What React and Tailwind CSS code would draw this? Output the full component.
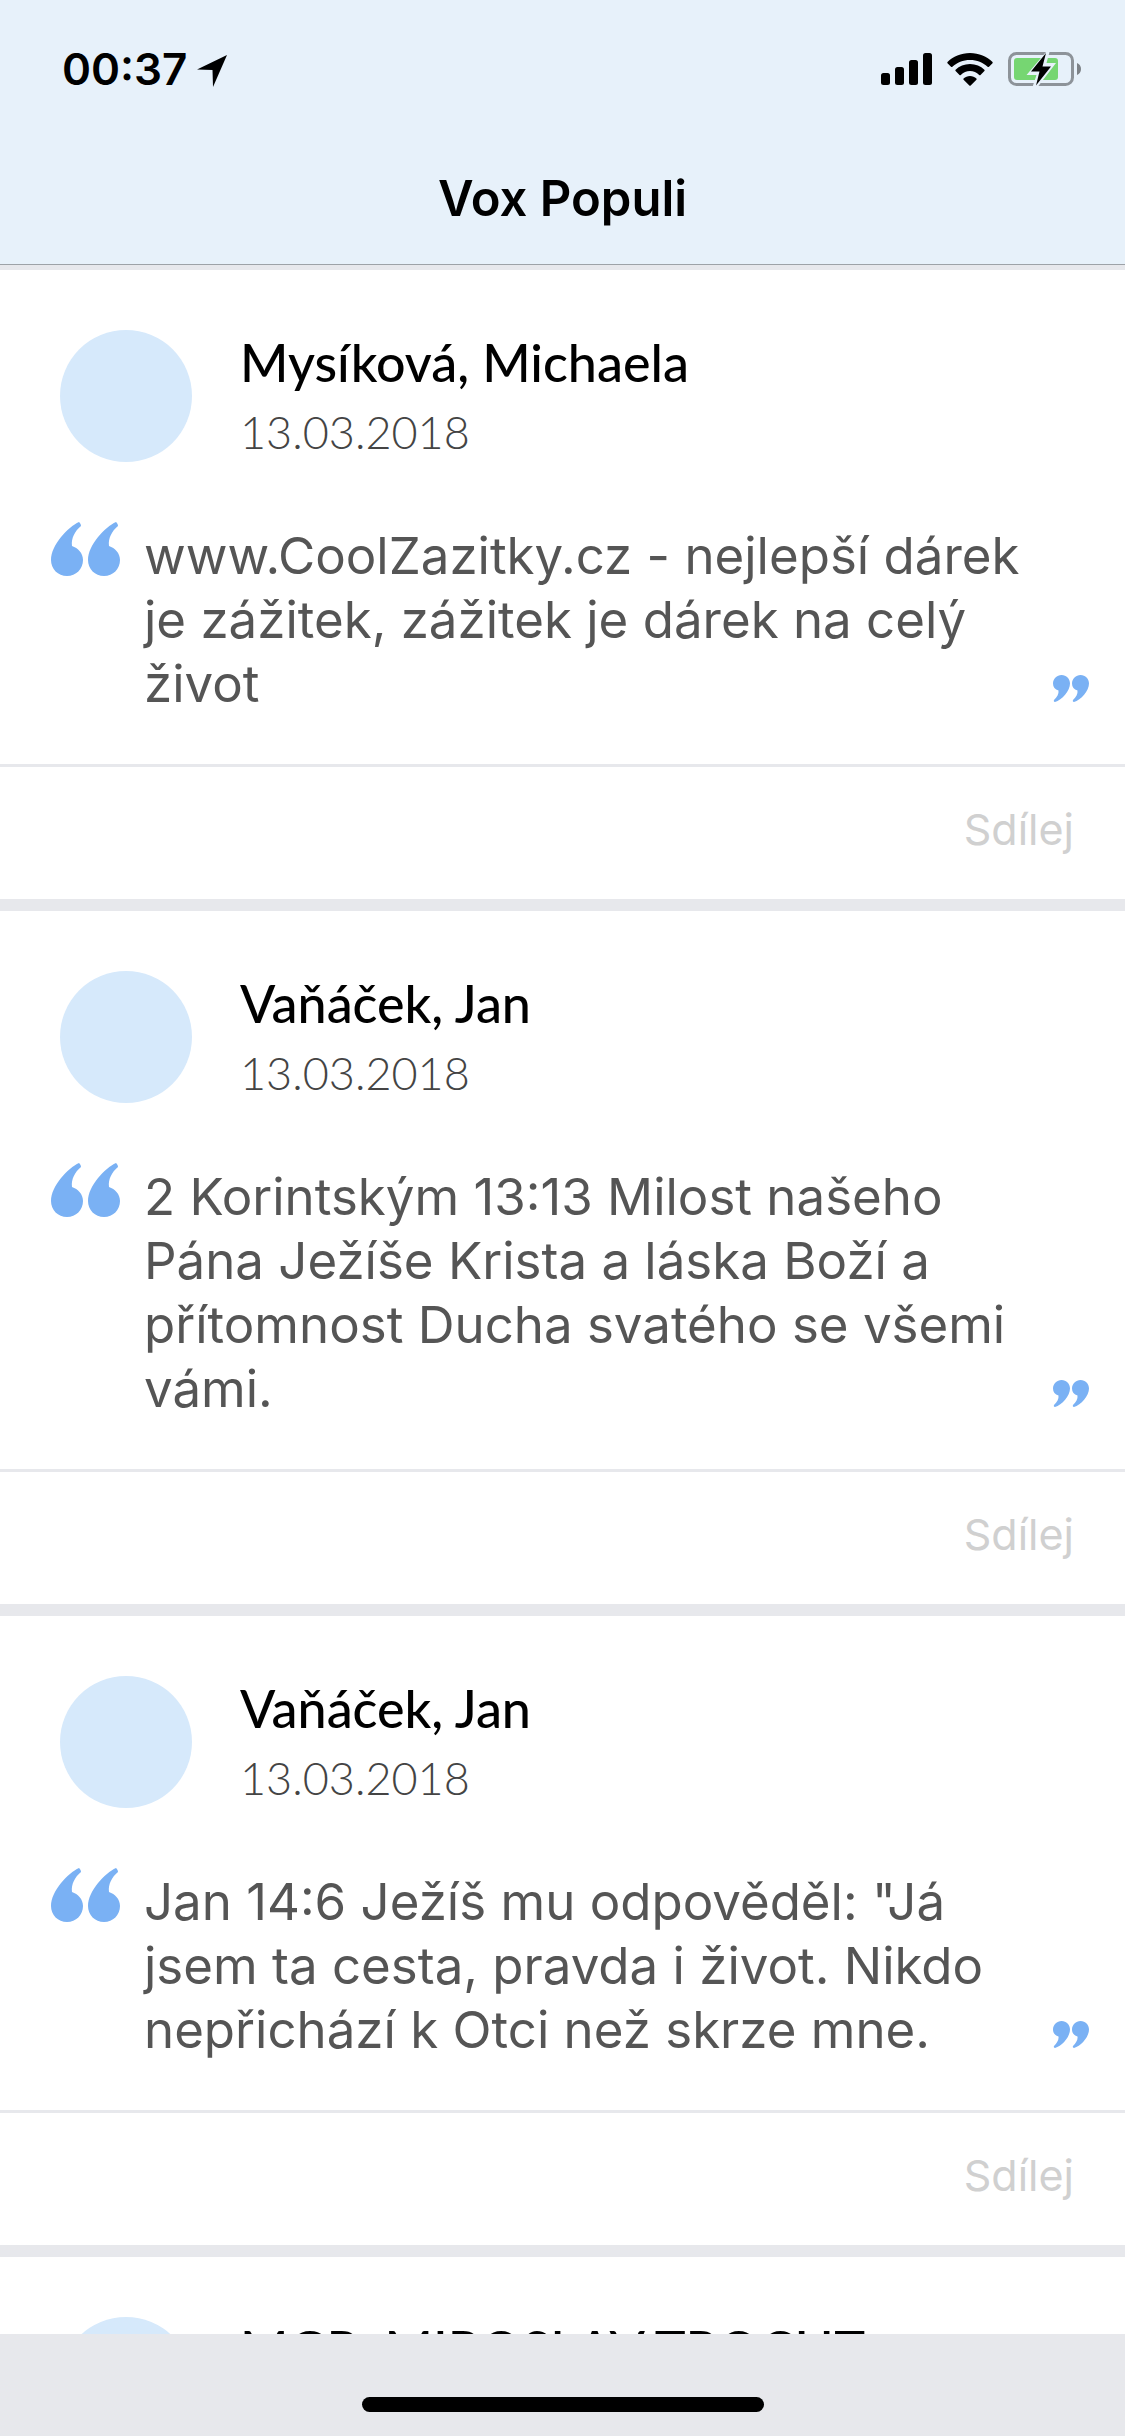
const posts = [
  { name: "Mysíková, Michaela", date: "13.03.2018", text: ["www.CoolZazitky.cz - nejlepší dárek", "je zážitek, zážitek je dárek na celý", "život"] },
  { name: "Vaňáček, Jan", date: "13.03.2018", text: ["2 Korintským 13:13 Milost našeho", "Pána Ježíše Krista a láska Boží a", "přítomnost Ducha svatého se všemi", "vámi."] },
  { name: "Vaňáček, Jan", date: "13.03.2018", text: ["Jan 14:6 Ježíš mu odpověděl: \"Já", "jsem ta cesta, pravda i život. Nikdo", "nepřichází k Otci než skrze mne."] },
  { name: "MGR. MIROSLAV TROCHT" },
];

function OpenQuote() {
  return (
    <svg viewBox="0 0 69 54" className="h-[54px] w-[69px] shrink-0 fill-[#7ab1f4]" aria-hidden="true">
      <path d="M28 0C29 1 30 2 30 4C24 9 20 16 21 24C27 26 32 31 32 38C32 47 25 54 16 54C7 54 0 47 0 38C0 23 17 5 28 0Z" />
      <path d="M65 0C66 1 67 2 67 4C61 9 57 16 58 24C64 26 69 31 69 38C69 47 62 54 53 54C44 54 37 47 37 38C37 23 54 5 65 0Z" />
    </svg>
  );
}

function CloseQuote() {
  return (
    <svg viewBox="0 0 36 27" className="h-[27px] w-9 shrink-0 fill-[#7ab1f4]" aria-hidden="true">
      <path d="M8.500 0C13.500 0 17 4 17 8.500C17 16 9 25 2 27C1 27 .5 26 1 25C4 22 6 19 5.500 15.500C2 14.500 0 12 0 8.500C0 4 4 0 8.500 0Z" />
      <path d="M27.500 0C32.500 0 36 4 36 8.500C36 16 28 25 21 27C20 27 19.500 26 20 25C23 22 25 19 24.500 15.500C21 14.500 19 12 19 8.500C19 4 23 0 27.500 0Z" />
    </svg>
  );
}

function StatusIcons() {
  return (
    <div className="flex items-center gap-[15px]">
      <svg viewBox="0 0 51 32" className="h-8 w-[51px]" aria-label="Signal" role="img">
        <rect x="0" y="20" width="9" height="12" rx="2.500" />
        <rect x="14" y="14" width="9" height="18" rx="2.500" />
        <rect x="28" y="7" width="9" height="25" rx="2.500" />
        <rect x="42" y="0" width="9" height="32" rx="2.500" />
      </svg>
      <svg viewBox="0 0 46 33" className="h-[33px] w-[46px]" aria-label="Wi-Fi" role="img">
        <path d="M23 0C32 0 40 3.500 45.500 9Q46 9.700 45.500 10.300L42 13.700Q41.300 14.200 40.600 13.700C36 9.500 30 7 23 7S10 9.500 5.400 13.700Q4.700 14.200 4 13.700L.5 10.300Q0 9.700 .5 9C6 3.500 14 0 23 0Z" />
        <path d="M23 11C28.700 11 33.700 13.200 37.400 16.700Q38 17.400 37.400 18.100L33.500 21.900Q32.900 22.400 32.200 21.900C29.600 19.500 26.500 18 23 18S16.400 19.500 13.800 21.900Q13.100 22.400 12.500 21.900L8.600 18.100Q8 17.400 8.600 16.700C12.300 13.200 17.300 11 23 11Z" />
        <path d="M23 23C25.500 23 27.700 24 29.400 25.500Q30 26.100 29.400 26.800L23.700 32.400Q23 33 22.300 32.400L16.600 26.800Q16 26.100 16.600 25.500C18.300 24 20.500 23 23 23Z" />
      </svg>
      <svg viewBox="0 0 73 34" className="h-[34px] w-[73px]" aria-label="Battery charging" role="img">
        <rect x="1.500" y="1.500" width="63" height="31" rx="7" fill="none" stroke="#8d9399" strokeWidth="3" />
        <rect x="6" y="6" width="44" height="22" rx="3" fill="#76d672" />
        <path d="M69 11C71.500 12 73 14 73 17S71.500 22 69 23Z" fill="#7d8287" />
        <path d="M38 0L18.500 23H28.500L24.500 35L30 34.500L48 11H38.500L41.500 0Z" fill="#e7f1fa" />
        <path d="M38 1L23 19.500H31.500L28 33.500L43 14.500H34.500Z" fill="#000" />
      </svg>
    </div>
  );
}

function Post({ post }) {
  return (
    <article className="bg-white">
      <div className="flex items-start gap-12 px-[60px] pt-[60px]">
        <div className="size-[132px] shrink-0 rounded-full bg-[#d6e9fb]" />
        <div className="font-['Lato',sans-serif]">
          <h2 className="text-[52px] leading-[64px] font-medium text-black">{post.name}</h2>
          {post.date && (
            <time className="mt-2 block text-[45px] leading-[60px] font-light text-[#444]">{post.date}</time>
          )}
        </div>
      </div>
      {post.text && (
        <>
          <div className="flex items-start pt-[60px] pr-9 pb-12 pl-[51px]">
            <OpenQuote />
            <p className="grow pt-0.5 pl-6 text-[51px] leading-[64px] text-[#555]">
              {post.text.map((line) => (
                <span key={line} className="block whitespace-nowrap">{line}</span>
              ))}
            </p>
            <div className="self-end pb-3.5">
              <CloseQuote />
            </div>
          </div>
          <div className="flex h-[135px] items-start justify-end border-t-[3px] border-[#e7e8ec] px-[51px] pt-8">
            <button type="button" className="text-[43px] leading-[60px] font-normal text-[#d0d0d0]">Sdílej</button>
          </div>
        </>
      )}
    </article>
  );
}

export default function App() {
  return (
    <div className="flex h-screen flex-col overflow-hidden bg-[#e7e8ec] font-['Inter',sans-serif]">
      <header className="shrink-0 border-b border-[#9da2a7] bg-[#e7f1fa]">
        <div className="flex h-[132px] items-center justify-between pt-1.5 pr-11 pl-[62px]">
          <div className="flex items-center gap-2.5">
            <span className="text-[44px] leading-[60px] font-semibold">00:37</span>
            <svg viewBox="0 0 30 32" className="mt-1 h-8 w-[30px]" aria-hidden="true">
              <path d="M30 0L16 32L15.500 15L0 14.500Z" />
            </svg>
          </div>
          <StatusIcons />
        </div>
        <h1 className="flex h-[132px] items-center justify-center pt-0.5 text-[49px] leading-[64px] font-semibold">Vox Populi</h1>
      </header>
      <main className="flex min-h-0 grow flex-col gap-3 overflow-hidden pt-[5px]">
        {posts.map((post, i) => (
          <Post key={i} post={post} />
        ))}
      </main>
      <footer className="flex h-[102px] shrink-0 items-end justify-center bg-[#e7e8ec] pb-6">
        <div className="h-[15px] w-[402px] rounded-full bg-black" />
      </footer>
    </div>
  );
}
